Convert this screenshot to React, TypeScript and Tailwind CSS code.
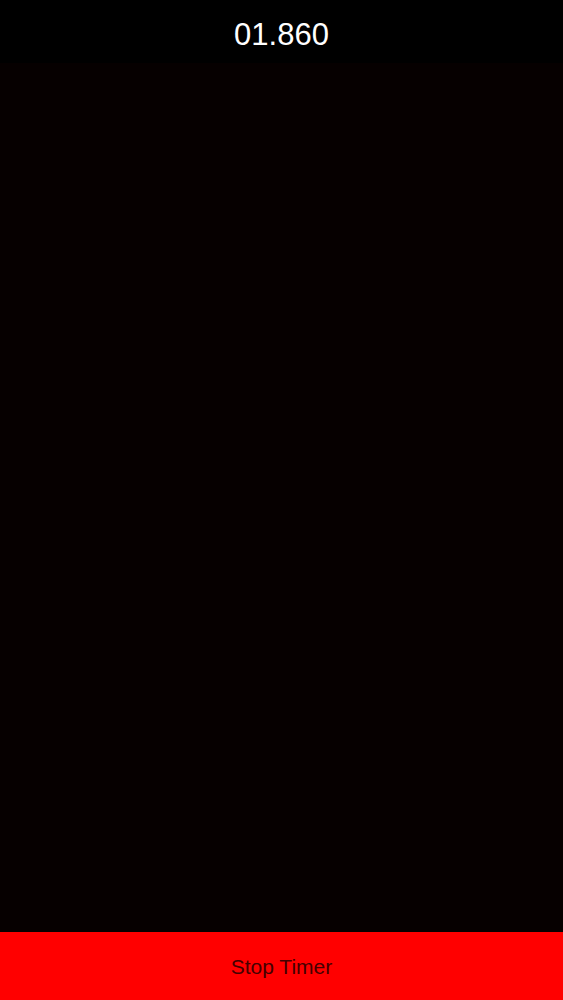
import React from 'react';

const App: React.FC = () => {
  return (
    <div className="h-[1000px] w-full flex flex-col bg-black" style={{ fontFamily: '"Liberation Sans", Arial, sans-serif' }}>
      <div className="h-[63px] flex items-center justify-center bg-black">
        <span className="text-white text-[31px] leading-none pt-[6px]">01.860</span>
      </div>
      <div className="flex-1 bg-[#060000]" />
      <button className="h-[68px] w-full bg-[#ff0000] flex items-center justify-center">
        <span className="text-[#440000] text-[21px] leading-none">Stop Timer</span>
      </button>
    </div>
  );
};

export default App;
